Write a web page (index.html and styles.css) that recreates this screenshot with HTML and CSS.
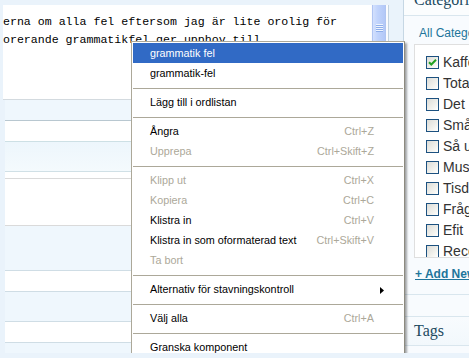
FILE: index.html
```html
<!DOCTYPE html>
<html lang="sv">
<head>
<meta charset="utf-8">
<title>Stavningskontroll</title>
<link rel="stylesheet" href="styles.css">
</head>
<body>
<div class="page">
  <main class="main">
    <div class="editor">
      <div class="editor-text">
        <p>erna om alla fel eftersom jag är lite orolig för</p>
        <p>orerande grammatikfel ger upphov till</p>
      </div>
      <div class="scrollbar"><div class="thumb"><span class="grip"></span></div></div>
    </div>
    <div class="row r-light h-a"></div>
    <div class="row r-white h-b"></div>
    <div class="row r-grad h-c"></div>
    <div class="row r-white h-d grey"></div>
    <div class="row r-white h-e grey"></div>
    <div class="row r-light h-f"></div>
    <div class="row r-white h-g"></div>
    <div class="row r-light h-h"></div>
    <div class="row r-white h-i"></div>
    <div class="row r-light h-j"></div>
  </main>

  <aside class="sidebar">
    <h3 class="side-head">Categories</h3>
    <div class="side-body">
      <div class="tabs"><a class="tab">All Categories</a></div>
      <ul class="cat-box">
        <li><span class="cb"><svg viewBox="0 0 11 11" width="11" height="11"><path d="M2 5.2 L4.3 7.5 L9 2.8" fill="none" stroke="#21a121" stroke-width="2"/></svg></span>Kaffe</li>
        <li><span class="cb"></span>Totalt</li>
        <li><span class="cb"></span>Det</li>
        <li><span class="cb"></span>Smått</li>
        <li><span class="cb"></span>Så upp</li>
        <li><span class="cb"></span>Musik</li>
        <li><span class="cb"></span>Tisdag</li>
        <li><span class="cb"></span>Frågor</li>
        <li><span class="cb"></span>Efit</li>
        <li><span class="cb"></span>Recept</li>
      </ul>
      <a class="add">+ Add New Category</a>
    </div>
    <div class="side-foot"></div>
    <h3 class="tags-head">Tags</h3>
  </aside>

  <div class="menu" role="menu">
    <div class="mi active"><span class="ml">grammatik fel</span></div>
    <div class="mi"><span class="ml">grammatik-fel</span></div>
    <div class="ms"></div>
    <div class="mi"><span class="ml">Lägg till i ordlistan</span></div>
    <div class="ms"></div>
    <div class="mi"><span class="ml">Ångra</span><span class="mk">Ctrl+Z</span></div>
    <div class="mi off"><span class="ml">Upprepa</span><span class="mk">Ctrl+Skift+Z</span></div>
    <div class="ms"></div>
    <div class="mi off"><span class="ml">Klipp ut</span><span class="mk">Ctrl+X</span></div>
    <div class="mi off"><span class="ml">Kopiera</span><span class="mk">Ctrl+C</span></div>
    <div class="mi"><span class="ml">Klistra in</span><span class="mk">Ctrl+V</span></div>
    <div class="mi"><span class="ml">Klistra in som oformaterad text</span><span class="mk">Ctrl+Skift+V</span></div>
    <div class="mi off"><span class="ml">Ta bort</span></div>
    <div class="ms"></div>
    <div class="mi sub"><span class="ml">Alternativ för stavningskontroll</span><svg class="arrow" viewBox="0 0 4 7" width="4" height="7"><path d="M0 0 L4 3.5 L0 7 Z" fill="#000"/></svg></div>
    <div class="ms"></div>
    <div class="mi"><span class="ml">Välj alla</span><span class="mk">Ctrl+A</span></div>
    <div class="ms"></div>
    <div class="mi"><span class="ml">Granska komponent</span></div>
  </div>
</div>
</body>
</html>
```

FILE: styles.css
```css
* {
  box-sizing: border-box;
  margin: 0;
  padding: 0;
}

html,
body {
  width: 469px;
  height: 358px;
  overflow: hidden;
}

body {
  background: #eaf3fb;
  font-family: "Liberation Sans", Arial, sans-serif;
}

.page {
  position: relative;
  height: 353px;
  overflow: hidden;
  display: flex;
  align-items: flex-start;
}

/* ---------- main column ---------- */
.main {
  flex: 0 0 384px;
  margin: 5px 0 0 5px;
}

.editor {
  position: relative;
  height: 95px;
  margin-left: -2px;
  background: #fff;
  border-bottom: 1px solid #d3dadf;
  overflow: hidden;
}

.editor-text {
  padding-top: 8px;
  font-family: "Liberation Mono", "Courier New", monospace;
  font-size: 11.6px;
  line-height: 17.7px;
  color: #000;
  white-space: nowrap;
}

.scrollbar {
  position: absolute;
  top: 0;
  right: 0;
  bottom: 0;
  width: 18px;
  padding: 0 2px 0 1px;
  background: #fbfcfe;
  border-right: 1px solid #c3d3e1;
}

.thumb {
  position: relative;
  height: 62px;
  border: 1px solid #b0c5f2;
  border-top: 0;
  border-radius: 0 0 2px 2px;
  background: linear-gradient(90deg, #d3e0fd, #c0d3fc 40%, #b3c8f7);
}

.grip {
  position: absolute;
  left: 3px;
  top: 19px;
  width: 7px;
  height: 8px;
  background: repeating-linear-gradient(180deg, #eef4fe 0 1px, #8eaeea 1px 2px);
}

.row {
  border-bottom: 1px solid #cfdde5;
}

.r-light { background: #eff7fd; }
.r-white { background: #fff; }
.r-grad { background: linear-gradient(180deg, #edf6fc, #f4fafd); }
.grey { border-bottom-color: #dadada; }

.h-a { height: 21px; border-bottom-color: #b8c7d0; }
.h-b { height: 21px; border-bottom-color: #cde0e5; }
.h-c { height: 30px; border-bottom-color: #d0e0e6; }
.h-d { height: 7px; }
.h-e { height: 47px; }
.h-f { height: 45px; }
.h-g { height: 21px; }
.h-h { height: 30px; }
.h-i { height: 21px; }
.h-j { height: 20px; border-bottom: 0; }

/* ---------- sidebar ---------- */
.sidebar {
  flex: 0 0 230px;
  margin-left: 14px;
  height: 353px;
  border-left: 1px solid #c6d7e4;
  background: #f8fbfe;
}

.side-head,
.tags-head {
  font-family: "Liberation Serif", "Times New Roman", serif;
  font-weight: normal;
  font-size: 16px;
  line-height: 18px;
  color: #21495f;
  padding-left: 10px;
  border-bottom: 1px solid #d9e6ee;
}

.side-head {
  margin-top: -9px;
  padding-bottom: 6px;
  background: #fbfdfe;
}

.side-body {
  padding: 0 10px 13px;
  border-bottom: 1px solid #d9e6ee;
}

.tabs {
  margin: 8px 0 2px;
  padding-left: 5px;
  font-size: 12px;
  line-height: 18px;
}

.tab {
  color: #21759b;
}

.cat-box {
  list-style: none;
  height: 214px;
  padding: 7px 0 0 11px;
  border: 1px solid #dfdfdf;
  background: #fff;
  overflow: hidden;
}

.cat-box li {
  display: flex;
  align-items: center;
  gap: 4px;
  height: 21px;
  font-size: 14px;
  line-height: 21px;
  color: #333;
  white-space: nowrap;
}

.cb {
  flex: 0 0 13px;
  width: 13px;
  height: 13px;
  border: 1px solid #1c5180;
  background: linear-gradient(135deg, #dcdcd7, #f4f4f0 70%, #fff);
  display: flex;
  align-items: center;
  justify-content: center;
}

.add {
  display: block;
  margin-top: 9px;
  padding-left: 1px;
  font-size: 12px;
  font-weight: bold;
  line-height: 14px;
  color: #21759b;
  text-decoration: underline;
}

.side-foot {
  height: 22px;
  border-bottom: 1px solid #d9e6ee;
}

.tags-head {
  padding-top: 5px;
  padding-bottom: 5px;
  background: linear-gradient(180deg, #f8fbfe, #f2f8fc);
}

/* ---------- context menu ---------- */
.menu {
  position: absolute;
  left: 131px;
  top: 41px;
  width: 274px;
  padding: 1px;
  background: #fff;
  border: 1px solid #aca899;
  border-right-color: #8d8b80;
  box-shadow: 2px 2px 2px rgba(0, 0, 0, 0.35);
  font-family: "Liberation Sans", Tahoma, sans-serif;
  font-size: 10.8px;
  color: #000;
}

.mi {
  position: relative;
  display: flex;
  height: 20px;
  line-height: 20px;
  padding: 0 29px 0 17px;
  white-space: nowrap;
}

.ml {
  flex: 1;
}

.mk {
  color: #aca899;
}

.off {
  color: #aca899;
}

.active {
  background: #316ac5;
  color: #fff;
}

.ms {
  height: 9px;
  padding-top: 5px;
}

.ms::before {
  content: "";
  display: block;
  height: 1px;
  background: #aca899;
}

.arrow {
  position: absolute;
  right: 19px;
  top: 8px;
}
```
